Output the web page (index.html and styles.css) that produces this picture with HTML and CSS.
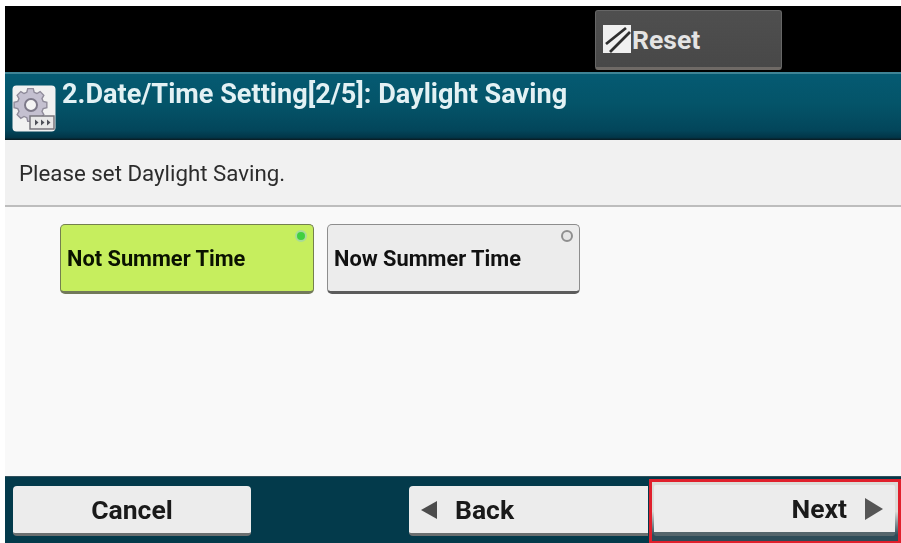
FILE: index.html
```html
<!DOCTYPE html>
<html lang="en">
<head>
<meta charset="utf-8">
<title>Daylight Saving</title>
<link rel="stylesheet" href="styles.css">
</head>
<body>
<div class="screen">
  <header class="topbar">
    <button class="reset">
      <svg class="reset-icon" viewBox="0 0 28 28" width="28" height="28" aria-hidden="true">
        <rect width="28" height="28" fill="#f0f0f0"/>
        <path d="M3 19 L23 3 M7 27 L27 7" stroke="#2e2e2e" stroke-width="2.800" fill="none"/>
      </svg>
      <span>Reset</span>
    </button>
  </header>
  <div class="titlebar">
    <svg class="title-icon" viewBox="0 0 44 47" width="44" height="47" aria-hidden="true">
      <rect x="0.5" y="0.5" width="43" height="46" rx="4" fill="#f1f1f1"/>
      <path d="M16 5h6l1 4 3 1.300 3.500-2 4 4-2 3.500 1.300 3 4 1v6l-4 1-1.300 3 2 3.500-4 4-3.500-2-3 1.300-1 4h-6l-1-4-3-1.300-3.500 2-4-4 2-3.500-1.300-3-4-1v-6l4-1 1.300-3-2-3.500 4-4 3.500 2 3-1.300z" transform="translate(1 -1) scale(0.92)" fill="#c4c0d0" stroke="#8f8b9a" stroke-width="1.500"/>
      <circle cx="19" cy="20" r="6" fill="#f4f4f4" stroke="#7d7989" stroke-width="2"/>
      <rect x="18" y="31" width="24" height="13" fill="#e8e8e8" stroke="#77757c" stroke-width="1.500"/>
      <path d="M23 34.500l3.500 3-3.500 3zM29 34.500l3.500 3-3.500 3zM35 34.500l3.500 3-3.500 3z" fill="#4e5058"/>
    </svg>
    <h1 class="title">2.Date/Time Setting[2/5]: Daylight Saving</h1>
  </div>
  <div class="prompt">Please set Daylight Saving.</div>
  <main class="content">
    <button class="option option-on">Not Summer Time<i class="led led-on"></i></button>
    <button class="option option-off">Now Summer Time<i class="led"></i></button>
  </main>
  <footer class="footer">
    <button class="nav cancel">Cancel</button>
    <button class="nav back"><i class="tri tri-left"></i>Back</button>
    <div class="next-frame">
      <button class="nav next">Next<i class="tri tri-right"></i></button>
    </div>
  </footer>
</div>
</body>
</html>
```
FILE: styles.css
```css
* { box-sizing: border-box; }
html, body { margin: 0; height: 100%; background: #fff; overflow: hidden; }
body { padding: 6px 0 0 5px; font-family: Roboto, "Liberation Sans", sans-serif; }
button { font-family: inherit; margin: 0; cursor: pointer; }

.screen {
  width: 896px; height: 537px;
  display: flex; flex-direction: column;
  background: #f9f9f9;
  filter: blur(0.6px);
}

.topbar {
  height: 66px; flex: none;
  background: #000;
  padding: 4px 0 0 590px;
}
.reset {
  width: 187px; height: 60px;
  display: flex; align-items: center; gap: 1px;
  padding: 0 0 0 7px;
  background: linear-gradient(#4f4f4f, #484848);
  border: 1px solid #666;
  border-bottom: 3px solid #6f6a66;
  border-radius: 3px;
  color: #e4e4e4;
  font-size: 26.500px; font-weight: 700;
}
.reset-icon { flex: none; }

.titlebar {
  height: 68px; flex: none;
  display: flex; align-items: flex-start;
  padding: 11px 0 0 7px;
  background: linear-gradient(#055a72 0%, #045469 45%, #03465b 85%, #023648 96%, #0a1a20 100%);
  border-top: 2px solid #3f8496;
}
.title-icon { flex: none; }
.title {
  margin: -7px 0 0 6px;
  font-size: 27.100px; font-weight: 700; line-height: 32px;
  color: #e3f1f4; white-space: nowrap;
}

.prompt {
  height: 67px; flex: none;
  display: flex; align-items: center;
  padding: 0 0 0 14px;
  background: #f1f1f1;
  border-bottom: 2px solid #bdbdbd;
  color: #2c2c2c;
  font-size: 22.300px;
}

.content {
  flex: 1;
  display: flex; align-items: flex-start; gap: 13px;
  padding: 17px 0 0 55px;
  background: #f9f9f9;
}
.option {
  position: relative;
  width: 254px; height: 70px;
  padding: 0 0 0 6px;
  text-align: left;
  background: #ececec;
  border: 1px solid #8d8d8d;
  border-bottom: 3px solid #5c5c5c;
  border-radius: 5px;
  color: #111;
  font-size: 21.800px; font-weight: 700;
}
.option-off { width: 253px; }
.option-on {
  background: #c6ee5e;
  border-color: #74804e;
  border-bottom-color: #72795a;
  color: #0a1200;
}
.led {
  position: absolute; top: 5px; right: 6px;
  width: 12px; height: 12px;
  border-radius: 50%;
  background: #e6e6e6;
  border: 2px solid #8f8f8f;
}
.led-on { background: #40d040; border-color: #a8dc98; }

.footer {
  height: 67px; flex: none;
  display: flex; align-items: flex-start;
  padding: 9px 0 0 8px;
  background: #033a4b;
  border-top: 1px solid #30505c;
}
.nav {
  height: 50px;
  background: #ececec;
  border: 0;
  border-bottom: 3px solid #6b6f70;
  border-radius: 4px;
  color: #1a1a1a;
  font-size: 26.500px; font-weight: 700;
  display: flex; align-items: center;
}
.cancel { width: 238px; justify-content: center; }
.back {
  width: 239px; margin-left: 158px;
  padding-left: 12px; gap: 18px;
  border-radius: 4px 0 0 4px;
}
.next-frame {
  width: 252px; height: 65px;
  margin: -7px 0 0 1px;
  padding: 3px 3px 0 2px;
  border: 3px solid #e0202c;
  background: linear-gradient(#dcdcd8 0, #dcdcd8 50%, #2e4c58 90%);
}
.next {
  width: 100%; height: 51px;
  justify-content: flex-end;
  gap: 18px;
  padding-right: 12px;
  border-bottom: 4px solid #56666c;
  border-radius: 2px;
}
.tri { display: block; width: 0; height: 0; border-style: solid; }
.tri-left { border-width: 9px 16px 9px 0; border-color: transparent #4c4c4c transparent transparent; }
.tri-right { border-width: 11px 0 11px 18px; border-color: transparent transparent transparent #555; }
```
